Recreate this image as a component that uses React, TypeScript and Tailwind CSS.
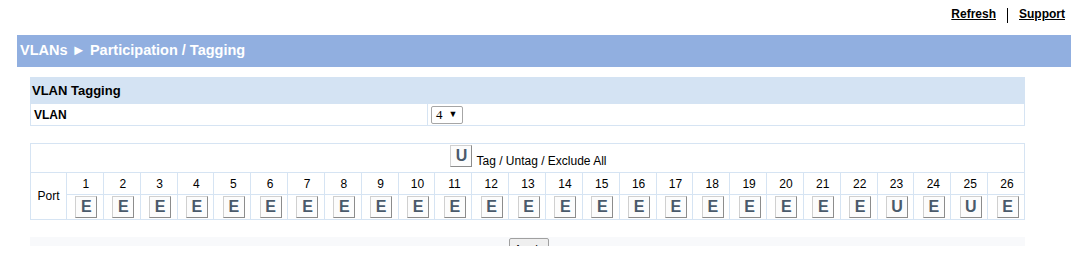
import React from "react";

const ports = Array.from({ length: 26 }, (_, i) => i + 1);
// ports that are untagged members, all others excluded
const untagged = [23, 25];

function ModeButton({ mode }: { mode: string }) {
  return (
    <button className="w-[22px] h-[22px] flex items-center justify-center bg-[#fcfcfc] border border-[#d0d0d0] border-r-[#8c8c8c] border-b-[#8c8c8c] text-[16px] leading-none font-bold text-[#4a5a6b]">
      {mode}
    </button>
  );
}

export default function App() {
  return (
    <div className="w-[1071px] h-[263px] overflow-hidden bg-white font-['Liberation_Sans',Arial,sans-serif] text-black">
      {/* top links */}
      <div className="h-[35px] flex justify-end items-start pt-[7px] pr-[6px] text-[12px] font-bold">
        <a className="underline leading-[14px]">Refresh</a>
        <span className="w-px h-[15px] bg-black mx-[11px] mt-[1px]" />
        <a className="underline leading-[14px]">Support</a>
      </div>

      {/* page title */}
      <div className="ml-[17px] h-[32px] bg-[#91afe0] flex items-center pl-[3px] pb-[1px] text-white font-bold text-[14.5px]">
        VLANs ► Participation / Tagging
      </div>

      <div className="ml-[30px] w-[995px]">
        {/* VLAN Tagging */}
        <div className="mt-[10px]">
          <div className="h-[27px] bg-[#d4e3f3] flex items-center pl-[2px] text-[13px] font-bold">
            VLAN Tagging
          </div>
          <div className="h-[22px] flex border border-t-0 border-[#d6e4f3] text-[12px]">
            <div className="w-[397px] border-r border-[#d6e4f3] flex items-center pl-[3px] font-bold">
              VLAN
            </div>
            <div className="flex items-center pl-[3px]">
              <div className="w-[32px] h-[18px] border border-[#a6a6a6] rounded-[2px] flex items-center pl-[4px] gap-[6px] text-[13px] font-['Liberation_Serif',serif]">
                <span>4</span>
                <span className="text-[9px] font-['Liberation_Sans',sans-serif]">▼</span>
              </div>
            </div>
          </div>
        </div>

        {/* port table */}
        <table className="mt-[17px] w-[995px] table-fixed border-collapse text-[12px]">
          <colgroup>
            <col className="w-[36px]" />
            {ports.map((p) => (
              <col key={p} />
            ))}
          </colgroup>
          <tbody>
            <tr className="h-[29px]">
              <td colSpan={27} className="border border-[#d6e4f3] align-bottom p-0">
                <div className="flex justify-center items-end gap-[4px] pl-[2px] pb-[4px]">
                  <div className="mb-[1px]">
                    <ModeButton mode="U" />
                  </div>
                  <span className="leading-[14px]">Tag / Untag / Exclude All</span>
                </div>
              </td>
            </tr>
            <tr className="h-[22px]">
              <td rowSpan={2} className="border border-[#d6e4f3] text-center p-0">
                Port
              </td>
              {ports.map((p) => (
                <td key={p} className="border border-[#d6e4f3] text-center p-0 pl-[2px]">
                  {p}
                </td>
              ))}
            </tr>
            <tr className="h-[25px]">
              {ports.map((p) => (
                <td key={p} className="border border-[#d6e4f3] p-0">
                  <div className="flex justify-center pl-[3px]">
                    <ModeButton mode={untagged.includes(p) ? "U" : "E"} />
                  </div>
                </td>
              ))}
            </tr>
          </tbody>
        </table>

        {/* apply bar, clipped by the frame */}
        <div className="mt-[17px] h-[9px] overflow-hidden bg-[#f8f9fb] flex justify-center">
          <button className="mt-[1px] ml-[3px] w-[40px] h-[22px] shrink-0 border border-[#a0a0a0] rounded-[2px] bg-[#efefef] text-[12px] leading-none pt-[1px]">
            Apply
          </button>
        </div>
      </div>
    </div>
  );
}
